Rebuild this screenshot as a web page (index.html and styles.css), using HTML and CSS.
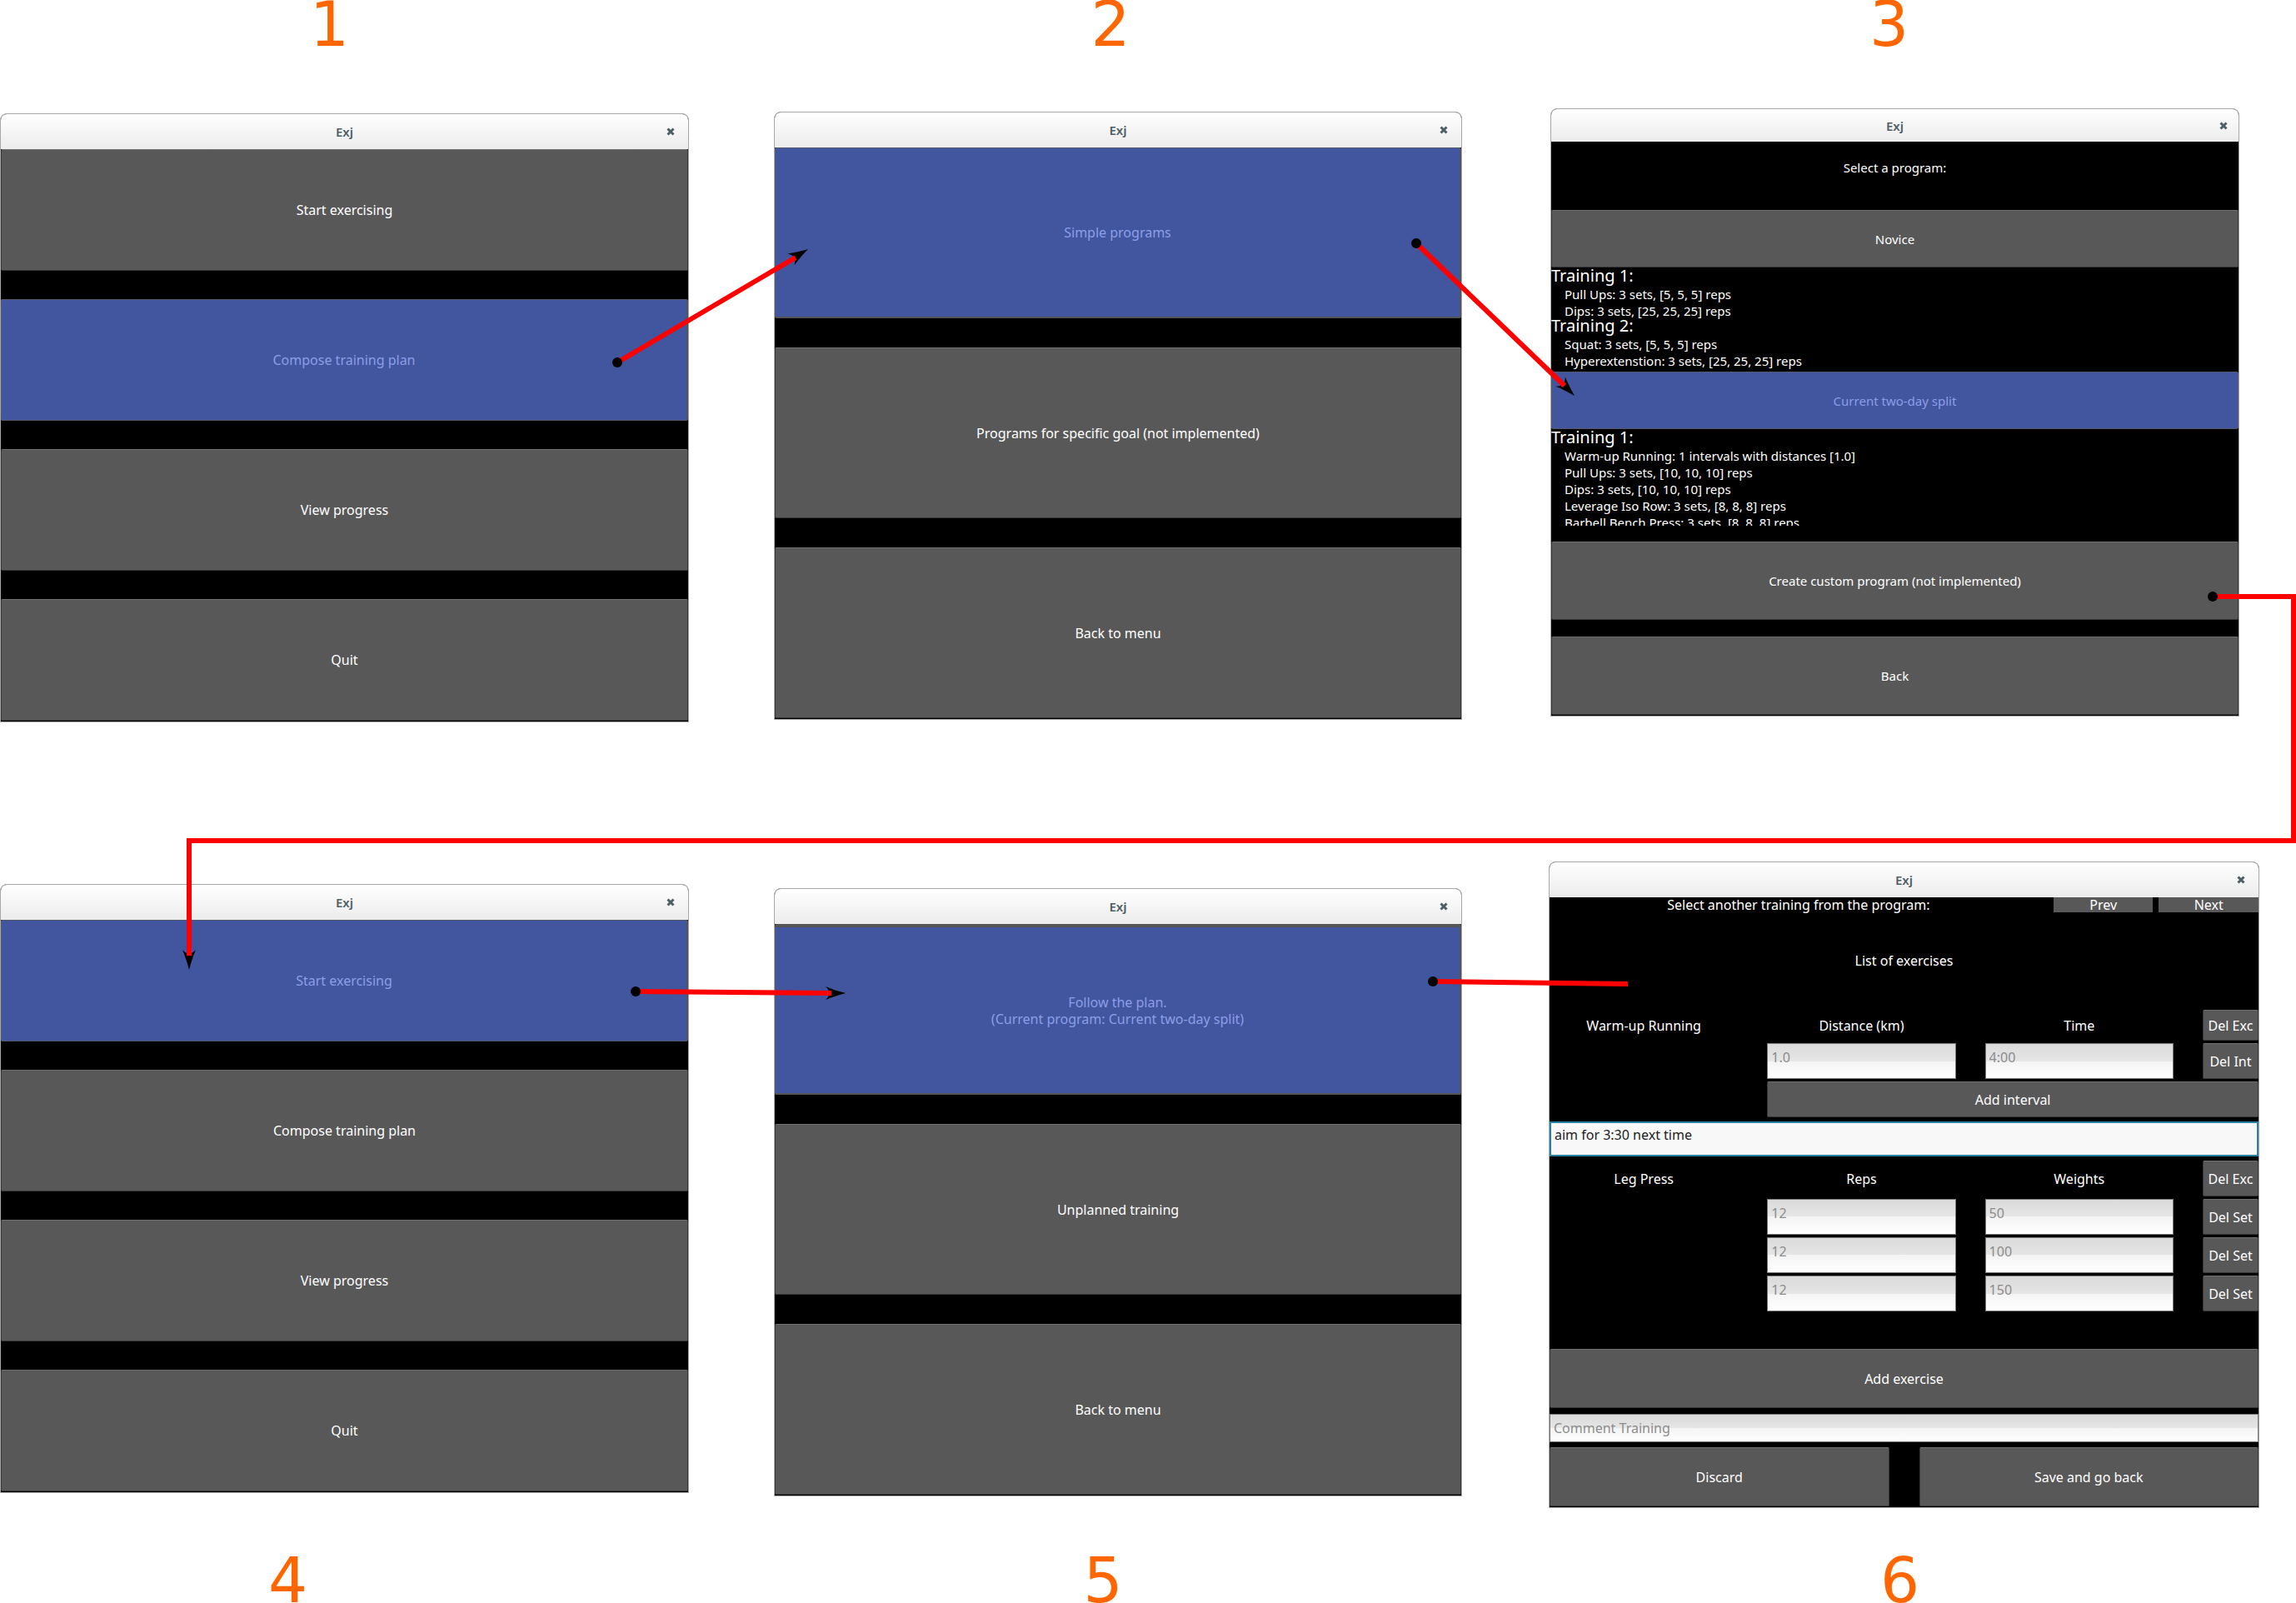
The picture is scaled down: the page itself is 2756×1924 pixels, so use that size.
FILE: index.html
```html
<!DOCTYPE html>
<html lang="en">
<head>
<meta charset="utf-8">
<title>Exj</title>
<link rel="stylesheet" href="styles.css">
</head>
<body>
<main class="board">

  <div class="row row-top">
    <section class="step">
      <h2 class="number n1">1</h2>
      <div class="window drop-80">
        <header class="titlebar"><span>Exj</span><button class="close" aria-label="Close"><svg viewBox="0 0 10 10"><path d="M1.5 1.5 8.500 8.500M8.500 1.500 1.500 8.500"/></svg></button></header>
        <div class="menu four">
          <button>Start exercising</button>
          <button class="on">Compose training plan</button>
          <button>View progress</button>
          <button>Quit</button>
        </div>
      </div>
    </section>

    <section class="step">
      <h2 class="number n2">2</h2>
      <div class="window drop-78">
        <header class="titlebar"><span>Exj</span><button class="close" aria-label="Close"><svg viewBox="0 0 10 10"><path d="M1.5 1.5 8.500 8.500M8.500 1.500 1.500 8.500"/></svg></button></header>
        <div class="menu three">
          <button class="on">Simple programs</button>
          <button>Programs for specific goal (not implemented)</button>
          <button>Back to menu</button>
        </div>
      </div>
    </section>

    <section class="step">
      <h2 class="number n3">3</h2>
      <div class="window drop-74">
        <header class="titlebar slim"><span>Exj</span><button class="close" aria-label="Close"><svg viewBox="0 0 10 10"><path d="M1.5 1.5 8.500 8.500M8.500 1.500 1.500 8.500"/></svg></button></header>
        <div class="programs">
          <p class="prompt">Select a program:</p>
          <button class="program">Novice</button>
          <div class="details">
            <h3>Training 1:</h3>
            <ul>
              <li>Pull Ups: 3 sets, [5, 5, 5] reps</li>
              <li>Dips: 3 sets, [25, 25, 25] reps</li>
            </ul>
            <h3>Training 2:</h3>
            <ul>
              <li>Squat: 3 sets, [5, 5, 5] reps</li>
              <li>Hyperextenstion: 3 sets, [25, 25, 25] reps</li>
            </ul>
          </div>
          <button class="program on">Current two-day split</button>
          <div class="details cut">
            <h3>Training 1:</h3>
            <ul>
              <li>Warm-up Running: 1 intervals with distances [1.0]</li>
              <li>Pull Ups: 3 sets, [10, 10, 10] reps</li>
              <li>Dips: 3 sets, [10, 10, 10] reps</li>
              <li>Leverage Iso Row: 3 sets, [8, 8, 8] reps</li>
              <li>Barbell Bench Press: 3 sets, [8, 8, 8] reps</li>
            </ul>
          </div>
          <div class="actions">
            <button>Create custom program (not implemented)</button>
            <button>Back</button>
          </div>
        </div>
      </div>
    </section>
  </div>

  <div class="row row-bottom">
    <section class="step">
      <div class="window drop-27">
        <header class="titlebar"><span>Exj</span><button class="close" aria-label="Close"><svg viewBox="0 0 10 10"><path d="M1.5 1.5 8.500 8.500M8.500 1.500 1.500 8.500"/></svg></button></header>
        <div class="menu four">
          <button class="on">Start exercising</button>
          <button>Compose training plan</button>
          <button>View progress</button>
          <button>Quit</button>
        </div>
      </div>
      <h2 class="number n4">4</h2>
    </section>

    <section class="step">
      <div class="window drop-32">
        <header class="titlebar"><span>Exj</span><button class="close" aria-label="Close"><svg viewBox="0 0 10 10"><path d="M1.5 1.5 8.500 8.500M8.500 1.500 1.500 8.500"/></svg></button></header>
        <div class="menu three">
          <button class="on lip">Follow the plan.<br>(Current program: Current two-day split)</button>
          <button>Unplanned training</button>
          <button>Back to menu</button>
        </div>
      </div>
      <h2 class="number n5">5</h2>
    </section>

    <section class="step">
      <div class="window">
        <header class="titlebar"><span>Exj</span><button class="close" aria-label="Close"><svg viewBox="0 0 10 10"><path d="M1.5 1.5 8.500 8.500M8.500 1.500 1.500 8.500"/></svg></button></header>
        <form class="log">
          <div class="switch">
            <span>Select another training from the program:</span>
            <button type="button">Prev</button>
            <button type="button">Next</button>
          </div>
          <h3 class="list-title">List of exercises</h3>
          <div class="exercise">
            <span class="short">Warm-up Running</span>
            <span>Distance (km)</span>
            <span>Time</span>
            <button type="button">Del Exc</button>
            <input class="second" type="text" value="1.0" aria-label="Distance (km)">
            <input type="text" value="4:00" aria-label="Time">
            <button type="button">Del Int</button>
            <button type="button" class="wide">Add interval</button>
          </div>
          <input class="note" type="text" value="aim for 3:30 next time" aria-label="Exercise comment">
          <div class="exercise">
            <span>Leg Press</span>
            <span>Reps</span>
            <span>Weights</span>
            <button type="button">Del Exc</button>
            <input class="second" type="text" value="12" aria-label="Reps, set 1">
            <input type="text" value="50" aria-label="Weight, set 1">
            <button type="button">Del Set</button>
            <input class="second" type="text" value="12" aria-label="Reps, set 2">
            <input type="text" value="100" aria-label="Weight, set 2">
            <button type="button">Del Set</button>
            <input class="second" type="text" value="12" aria-label="Reps, set 3">
            <input type="text" value="150" aria-label="Weight, set 3">
            <button type="button">Del Set</button>
          </div>
          <button type="button" class="add">Add exercise</button>
          <input class="comment" type="text" placeholder="Comment Training" aria-label="Comment Training">
          <div class="finish">
            <button type="button">Discard</button>
            <button type="button">Save and go back</button>
          </div>
        </form>
      </div>
      <h2 class="number n6">6</h2>
    </section>
  </div>

  <svg class="arrows" viewBox="0 0 2756 1924" preserveAspectRatio="none" aria-hidden="true">
    <defs>
      <path id="head" d="M0 0C-8 -2 -17 -5 -24 -8Q-15 0 -24 8C-17 5 -8 2 0 0Z"/>
    </defs>
    <use href="#head" transform="translate(970 299) rotate(-31)"/>
    <use href="#head" transform="translate(1890 475) rotate(45)"/>
    <use href="#head" transform="translate(227 1164) rotate(90)"/>
    <use href="#head" transform="translate(1015 1192)"/>
    <g class="lines">
      <path d="M741 435 955 309"/>
      <path d="M1700 292 1878 463"/>
      <path d="M2656 716H2753V1009H227V1147"/>
      <path d="M763 1190 998 1192"/>
      <path d="M1720 1178 1954 1181"/>
    </g>
    <circle cx="741" cy="435" r="6"/>
    <circle cx="1700" cy="292" r="6"/>
    <circle cx="2656" cy="716" r="6"/>
    <circle cx="763" cy="1190" r="6"/>
    <circle cx="1720" cy="1178" r="6"/>
  </svg>
</main>
</body>
</html>
```
FILE: styles.css
```css
* { box-sizing: border-box; }

body {
  margin: 0;
  background: #fff;
  color: #fff;
  font: 16px/20px "Noto Sans", "Open Sans", sans-serif;
}

h2, h3, p, ul { margin: 0; padding: 0; font-weight: 400; }
ul { list-style: none; }

button, input { font: inherit; margin: 0; border-radius: 0; }

button {
  display: block;
  padding: 0;
  color: #fff;
  text-align: center;
  background: #585858;
  border: 1px solid #383838;
  border-top-color: #707070;
  border-radius: 2px;
}

.board { position: relative; padding-top: 2px; }

.row { display: grid; }
.row-top { grid-template-columns: 827fr 102fr 826fr 106fr 827fr 68fr; }
.row-bottom { grid-template-columns: 827fr 102fr 826fr 104fr 853fr 44fr; margin-top: 167px; }

.step { display: flex; flex-direction: column; }
.step:nth-child(1) { grid-column: 1; }
.step:nth-child(2) { grid-column: 3; }
.step:nth-child(3) { grid-column: 5; }

.number {
  color: #ff6600;
  font: 74px/54px "DejaVu Sans", sans-serif;
  text-align: center;
}
.row-bottom .number { margin-top: auto; }
.row-bottom .step:nth-child(3) .number { margin-top: 60px; }
.n1 { padding-right: 36px; }
.n2 { padding-right: 18px; }
.n3 { padding-right: 14px; }
.n4 { padding-right: 136px; }
.n5 { padding-right: 36px; }
.n6 { padding-right: 10px; }

.drop-80 { margin-top: 80px; }
.drop-78 { margin-top: 78px; }
.drop-74 { margin-top: 74px; }
.drop-27 { margin-top: 27px; }
.drop-32 { margin-top: 32px; }

.window {
  padding-bottom: 1px;
  background: #000;
  border: 1px solid #a8a8a8;
  border-radius: 8px 8px 0 0;
  overflow: hidden;
}

.titlebar {
  display: grid;
  grid-template-columns: 42px 1fr 42px;
  align-items: center;
  height: 42px;
  color: #4d5f66;
  font-size: 15px;
  font-weight: 600;
  text-align: center;
  background: linear-gradient(#fff, #ececec);
}
.titlebar span { grid-column: 2; }
.titlebar.slim { grid-template-columns: 36px 1fr 36px; height: 39px; }
.close { background: none; border: 0; height: 20px; }
.close svg { display: block; width: 10px; height: 10px; margin: auto; }
.close path { stroke: #4d5f66; stroke-width: 3; fill: none; }

.on {
  color: #8c9ee6;
  background: #42559f;
  border-color: #55586a;
}

.menu { display: grid; }
.four { gap: 34px; grid-auto-rows: 146px; }
.three { gap: 35px; grid-auto-rows: 205px; }
.menu .on { border-right: 2px solid #555; }
.three .on { border-bottom: 2px solid #555; }
.menu .lip { border-top: 4px solid #555; }

.programs { display: grid; font-size: 15px; }
.prompt { height: 82px; padding-top: 21px; text-align: center; }
.program { height: 69px; }
.details { padding-bottom: 5px; }
.details h3 { font-size: 20px; line-height: 20px; }
.details ul { padding: 2px 0 0 16px; margin-bottom: -2px; }
.cut { height: 116px; padding: 0; overflow: hidden; }
.actions { display: grid; grid-auto-rows: 94px; gap: 20px; margin-top: 19px; }

.log { display: grid; }
.log input {
  min-width: 0;
  width: 100%;
  padding: 0 4px 10px;
  color: #8c8c8c;
  background: linear-gradient(#dadada, #e6e6e6 50%, #f4f4f4 50%, #fff);
  border: 1px solid #777;
}
.switch { display: grid; grid-template-columns: 5fr 1fr 1fr; gap: 7px; height: 18px; line-height: 18px; text-align: center; }
.switch button { border: 0; line-height: 18px; border-radius: 0; }
.list-title { font-size: 16px; line-height: 117px; text-align: center; }
.exercise {
  display: grid;
  grid-template-columns: 226fr 226fr 226fr 67fr;
  grid-auto-rows: 43px;
  column-gap: 35px;
  row-gap: 3px;
  align-items: stretch;
  text-align: center;
}
.exercise:has(.short) { grid-template-rows: 37px; }
.exercise span { align-self: center; }
.exercise .second { grid-column: 2; }
.exercise .wide { grid-column: 2 / 5; }
.log .note {
  height: 42px;
  margin: 5px 0;
  color: #222;
  background: #f8f8f8;
  border: 2px solid #2a7fa5;
}
.add { height: 71px; margin-top: 45px; }
.log .comment { height: 34px; margin: 7px 0 6px; padding: 0 4px; }
.comment::placeholder { color: #8c8c8c; opacity: 1; }
.finish { display: grid; grid-template-columns: 1fr 1fr; gap: 36px; grid-auto-rows: 71px; }

.arrows { position: absolute; inset: 0; width: 100%; height: 100%; pointer-events: none; }
.lines { fill: none; stroke: #f00; stroke-width: 6; }
```
